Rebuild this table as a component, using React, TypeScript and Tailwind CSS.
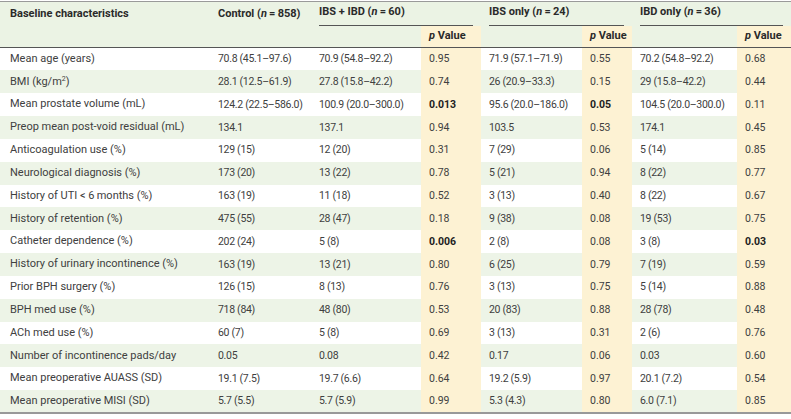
import React from 'react'

type Row = {
  label: React.ReactNode
  control: string
  both: string
  pBoth: string
  ibs: string
  pIbs: string
  ibd: string
  pIbd: string
  bold?: ('pBoth' | 'pIbs' | 'pIbd')[]
}

const rows: Row[] = [
  { label: 'Mean age (years)', control: '70.8 (45.1–97.6)', both: '70.9 (54.8–92.2)', pBoth: '0.95', ibs: '71.9 (57.1–71.9)', pIbs: '0.55', ibd: '70.2 (54.8–92.2)', pIbd: '0.68' },
  { label: <>BMI (kg/m<sup className="text-[7px]">2</sup>)</>, control: '28.1 (12.5–61.9)', both: '27.8 (15.8–42.2)', pBoth: '0.74', ibs: '26 (20.9–33.3)', pIbs: '0.15', ibd: '29 (15.8–42.2)', pIbd: '0.44' },
  { label: 'Mean prostate volume (mL)', control: '124.2 (22.5–586.0)', both: '100.9 (20.0–300.0)', pBoth: '0.013', ibs: '95.6 (20.0–186.0)', pIbs: '0.05', ibd: '104.5 (20.0–300.0)', pIbd: '0.11', bold: ['pBoth', 'pIbs'] },
  { label: 'Preop mean post-void residual (mL)', control: '134.1', both: '137.1', pBoth: '0.94', ibs: '103.5', pIbs: '0.53', ibd: '174.1', pIbd: '0.45' },
  { label: 'Anticoagulation use (%)', control: '129 (15)', both: '12 (20)', pBoth: '0.31', ibs: '7 (29)', pIbs: '0.06', ibd: '5 (14)', pIbd: '0.85' },
  { label: 'Neurological diagnosis (%)', control: '173 (20)', both: '13 (22)', pBoth: '0.78', ibs: '5 (21)', pIbs: '0.94', ibd: '8 (22)', pIbd: '0.77' },
  { label: 'History of UTI < 6\u2009months (%)', control: '163 (19)', both: '11 (18)', pBoth: '0.52', ibs: '3 (13)', pIbs: '0.40', ibd: '8 (22)', pIbd: '0.67' },
  { label: 'History of retention (%)', control: '475 (55)', both: '28 (47)', pBoth: '0.18', ibs: '9 (38)', pIbs: '0.08', ibd: '19 (53)', pIbd: '0.75' },
  { label: 'Catheter dependence (%)', control: '202 (24)', both: '5 (8)', pBoth: '0.006', ibs: '2 (8)', pIbs: '0.08', ibd: '3 (8)', pIbd: '0.03', bold: ['pBoth', 'pIbd'] },
  { label: 'History of urinary incontinence (%)', control: '163 (19)', both: '13 (21)', pBoth: '0.80', ibs: '6 (25)', pIbs: '0.79', ibd: '7 (19)', pIbd: '0.59' },
  { label: 'Prior BPH surgery (%)', control: '126 (15)', both: '8 (13)', pBoth: '0.76', ibs: '3 (13)', pIbs: '0.75', ibd: '5 (14)', pIbd: '0.88' },
  { label: 'BPH med use (%)', control: '718 (84)', both: '48 (80)', pBoth: '0.53', ibs: '20 (83)', pIbs: '0.88', ibd: '28 (78)', pIbd: '0.48' },
  { label: 'ACh med use (%)', control: '60 (7)', both: '5 (8)', pBoth: '0.69', ibs: '3 (13)', pIbs: '0.31', ibd: '2 (6)', pIbd: '0.76' },
  { label: 'Number of incontinence pads/day', control: '0.05', both: '0.08', pBoth: '0.42', ibs: '0.17', pIbs: '0.06', ibd: '0.03', pIbd: '0.60' },
  { label: 'Mean preoperative AUASS (SD)', control: '19.1 (7.5)', both: '19.7 (6.6)', pBoth: '0.64', ibs: '19.2 (5.9)', pIbs: '0.97', ibd: '20.1 (7.2)', pIbd: '0.54' },
  { label: 'Mean preoperative MISI (SD)', control: '5.7 (5.5)', both: '5.7 (5.9)', pBoth: '0.99', ibs: '5.3 (4.3)', pIbs: '0.80', ibd: '6.0 (7.1)', pIbd: '0.85' },
]

const N = ({ v }: { v: string }) => (
  <>
    (<i>n</i>{'\u2009=\u2009'}{v})
  </>
)

export default function App() {
  const pCell = 'bg-[#fdf2d3] px-2 whitespace-nowrap'
  const cell = 'px-2 whitespace-nowrap tracking-[-0.3px]'

  return (
    <div className="w-[791px] h-[419px] bg-white pt-[1px] font-['Roboto',sans-serif] text-[10.5px] text-[#404040]">
      <table className="w-[791px] table-fixed border-collapse">
        <colgroup>
          <col className="w-[210px]" />
          <col className="w-[101px]" />
          <col className="w-[110px]" />
          <col className="w-[60px]" />
          <col className="w-[101px]" />
          <col className="w-[50px]" />
          <col className="w-[105px]" />
          <col className="w-[54px]" />
        </colgroup>
        <thead className="bg-[#ebf3e4] font-bold text-[11px] text-[#2a2a2a]">
          <tr className="h-[24px] border-t border-[#9a9a9a]">
            <th className="pl-[10px] pr-2 text-left align-middle whitespace-nowrap">Baseline characteristics</th>
            <th className="px-2 text-left whitespace-nowrap">Control <N v="858" /></th>
            <th colSpan={2} className="px-2 pt-[2px] text-left align-bottom whitespace-nowrap">
              <div className="border-b border-[#555] pb-[4px]">IBS + IBD <N v="60" /></div>
            </th>
            <th colSpan={2} className="px-2 pt-[2px] text-left align-bottom whitespace-nowrap">
              <div className="border-b border-[#555] pb-[4px]">IBS only <N v="24" /></div>
            </th>
            <th colSpan={2} className="px-2 pt-[2px] text-left align-bottom whitespace-nowrap">
              <div className="border-b border-[#555] pb-[4px]">IBD only <N v="36" /></div>
            </th>
          </tr>
          <tr className="h-[22px] border-b border-[#555]">
            <th />
            <th />
            <th />
            <th className={`${pCell} text-left`}><i>p</i> Value</th>
            <th />
            <th className={`${pCell} text-left`}><i>p</i> Value</th>
            <th />
            <th className={`${pCell} text-left`}><i>p</i> Value</th>
          </tr>
        </thead>
        <tbody className="border-b-2 border-[#999]">
          {rows.map((r, i) => (
            <tr key={i} className={`h-[22.85px] ${i % 2 === 1 ? 'bg-[#edf4e7]' : 'bg-white'}`}>
              <td className="pl-[10px] pr-2 whitespace-nowrap text-[11px]">{r.label}</td>
              <td className={cell}>{r.control}</td>
              <td className={cell}>{r.both}</td>
              <td className={`${pCell} ${r.bold?.includes('pBoth') ? 'font-bold text-[#222]' : ''}`}>{r.pBoth}</td>
              <td className={cell}>{r.ibs}</td>
              <td className={`${pCell} ${r.bold?.includes('pIbs') ? 'font-bold text-[#222]' : ''}`}>{r.pIbs}</td>
              <td className={cell}>{r.ibd}</td>
              <td className={`${pCell} ${r.bold?.includes('pIbd') ? 'font-bold text-[#222]' : ''}`}>{r.pIbd}</td>
            </tr>
          ))}
        </tbody>
      </table>
    </div>
  )
}
